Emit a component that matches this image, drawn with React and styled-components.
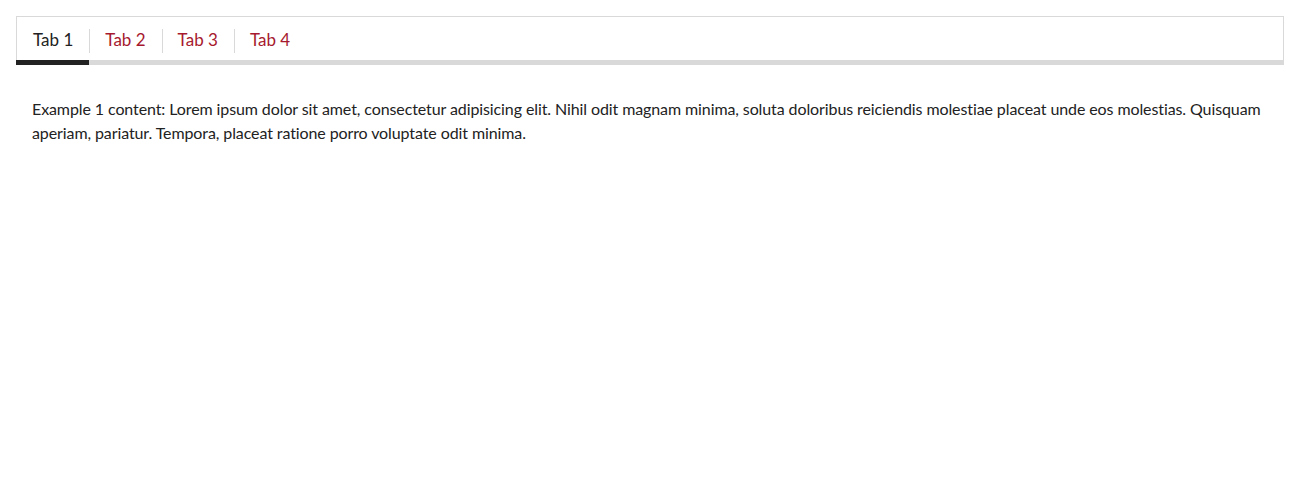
import React, { useState } from 'react';
import styled, { createGlobalStyle } from 'styled-components';

const GlobalStyle = createGlobalStyle`
  body {
    margin: 0;
    background: #fff;
    font-family: Lato, "Open Sans", sans-serif;
    color: #222;
  }
`;

const Page = styled.div`
  padding: 16px;
`;

const TabList = styled.div`
  display: flex;
  border: 1px solid #d9d9d9;
  border-bottom: 5px solid #d9d9d9;
`;

const Tab = styled.button`
  position: relative;
  display: flex;
  align-items: center;
  height: 43px;
  padding: 1px 16px 0 16px;
  border: 0;
  background: none;
  font-family: inherit;
  font-size: 17px;
  color: ${(p) => (p.$active ? '#222' : '#a6192e')};
  cursor: pointer;

  &::before {
    content: '';
    display: ${(p) => (p.$first ? 'none' : 'block')};
    position: absolute;
    left: 0;
    top: 12px;
    height: 24px;
    border-left: 1px solid #d9d9d9;
  }

  &::after {
    content: '';
    display: ${(p) => (p.$active ? 'block' : 'none')};
    position: absolute;
    left: ${(p) => (p.$first ? '-1px' : '0')};
    right: 0;
    bottom: -5px;
    height: 5px;
    background: #222;
  }
`;

const Panel = styled.div`
  padding: 32px 16px;
  font-size: 16px;
  line-height: 24px;
  letter-spacing: -0.1px;
`;

const tabs = ['Tab 1', 'Tab 2', 'Tab 3', 'Tab 4'];

export default function App() {
  const [active, setActive] = useState(0);
  const text = `Example ${active + 1} content: Lorem ipsum dolor sit amet, consectetur adipisicing elit. Nihil odit magnam minima, soluta doloribus reiciendis molestiae placeat unde eos molestias. Quisquam aperiam, pariatur. Tempora, placeat ratione porro voluptate odit minima.`;
  return (
    <Page>
      <GlobalStyle />
      <TabList>
        {tabs.map((t, i) => (
          <Tab key={t} $first={i === 0} $active={active === i} onClick={() => setActive(i)}>
            {t}
          </Tab>
        ))}
      </TabList>
      <Panel>{text}</Panel>
    </Page>
  );
}
